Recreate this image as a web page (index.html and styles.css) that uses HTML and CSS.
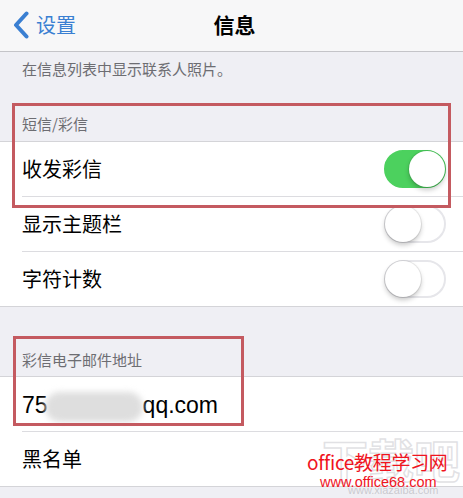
FILE: index.html
```html
<!DOCTYPE html>
<html lang="zh-CN">
<head>
    <meta charset="UTF-8">
    <meta name="viewport" content="width=device-width, initial-scale=1.0">
    <title>信息</title>
    <link rel="stylesheet" href="styles.css">
</head>
<body>
    <div class="page">
        <div class="nav">
            <div class="back">
                <svg class="chevron" width="18" height="28" viewBox="0 0 18 28">
                    <path d="M14.5 2.5 L4 14 L14.5 25.5" fill="none" stroke="#3a7fd2" stroke-width="4" stroke-linecap="round" stroke-linejoin="round"/>
                </svg>
                <span>设置</span>
            </div>
            <div class="title">信息</div>
        </div>

        <div class="note">在信息列表中显示联系人照片。</div>

        <div class="group-header first">短信/彩信</div>
        <div class="list">
            <div class="cell">
                <span class="label">收发彩信</span>
                <span class="toggle on"><span class="knob"></span></span>
            </div>
            <div class="cell">
                <span class="label">显示主题栏</span>
                <span class="toggle"><span class="knob"></span></span>
            </div>
            <div class="cell">
                <span class="label">字符计数</span>
                <span class="toggle"><span class="knob"></span></span>
            </div>
        </div>

        <div class="group-header second">彩信电子邮件地址</div>
        <div class="list">
            <div class="cell">
                <span class="email">75<span class="smudge"></span>qq.com</span>
            </div>
            <div class="cell">
                <span class="label">黑名单</span>
            </div>
        </div>

        <!-- annotation boxes and watermark drawn over the screenshot -->
        <div class="mark mark-1"></div>
        <div class="mark mark-2"></div>
        <div class="watermark">
            <div class="wm-big">下载吧</div>
            <div class="wm-red">office教程学习网</div>
            <div class="wm-url">www.office68.com</div>
            <div class="wm-small">www.xiazaiba.com</div>
        </div>
    </div>
</body>
</html>
```

FILE: styles.css
```css
body {
    margin: 0;
    background: #efeff4;
    font-family: "Noto Sans CJK SC", "Liberation Sans", sans-serif;
    color: #000;
}
.page {
    position: relative;
    width: 463px;
    height: 498px;
    overflow: hidden;
}
.nav {
    height: 51px;
    background: #f7f7f8;
    border-bottom: 1px solid #c4c4c8;
    display: flex;
    align-items: center;
    position: relative;
}
.back {
    display: flex;
    align-items: center;
    gap: 6px;
    padding-left: 12px;
    color: #3a7fd2;
    font-size: 20px;
    line-height: 24px;
    margin-top: -2px;
}
.chevron {
    display: block;
}
.title {
    position: absolute;
    left: 0;
    right: 0;
    top: 0;
    height: 51px;
    line-height: 51px;
    text-align: center;
    font-size: 21px;
    font-weight: 700;
    padding-left: 6px;
    margin-top: -1px;
    pointer-events: none;
}
.note {
    height: 45px;
    box-sizing: border-box;
    padding: 7px 22px 0;
    font-size: 15px;
    line-height: 20px;
    color: #6d6d72;
}
.group-header {
    display: flex;
    align-items: flex-end;
    box-sizing: border-box;
    padding: 0 22px;
    font-size: 15px;
    line-height: 20px;
    color: #6d6d72;
    border-bottom: 1px solid #d4d4d8;
}
.group-header.first {
    height: 45px;
    padding-bottom: 7px;
}
.group-header.second {
    height: 70px;
    padding-bottom: 6px;
}
.list {
    background: #fff;
    border-bottom: 1px solid #d4d4d8;
}
.cell {
    height: 55px;
    margin-left: 22px;
    padding-right: 17px;
    display: flex;
    align-items: center;
    justify-content: space-between;
    border-bottom: 1px solid #dcdce0;
    box-sizing: border-box;
}
.cell:last-child {
    border-bottom: none;
    height: 54px;
}
.label {
    font-size: 20px;
    line-height: 26px;
}
.email {
    font-family: "Liberation Sans", sans-serif;
    font-size: 23px;
    line-height: 26px;
    display: flex;
    align-items: center;
    margin-top: 1px;
}
.smudge {
    display: inline-block;
    width: 98px;
    height: 30px;
    margin-left: -3px;
    margin-top: 4px;
    border-radius: 15px;
    background: #dedede;
    filter: blur(3px);
}
.toggle {
    width: 62px;
    height: 38px;
    box-sizing: border-box;
    border-radius: 19px;
    border: 2px solid #e6e6ea;
    background: #fff;
    position: relative;
}
.toggle .knob {
    position: absolute;
    top: -1px;
    left: -1px;
    width: 36px;
    height: 36px;
    border-radius: 50%;
    background: #fff;
    box-shadow: 0 3px 5px rgba(0, 0, 0, 0.22), 0 0 0 1px rgba(0, 0, 0, 0.08);
}
.toggle.on {
    background: #4cd15e;
    border-color: #4cd15e;
}
.toggle.on .knob {
    left: auto;
    right: -1px;
}
.mark {
    position: absolute;
    border: 3px solid #c45a60;
    box-sizing: border-box;
}
.mark-1 {
    left: 12px;
    top: 103px;
    width: 439px;
    height: 105px;
}
.mark-2 {
    left: 13px;
    top: 336px;
    width: 231px;
    height: 90px;
}
.watermark {
    position: absolute;
    left: 300px;
    top: 420px;
    width: 163px;
    height: 78px;
}
.wm-big {
    position: absolute;
    left: 22px;
    top: 8px;
    font-size: 46px;
    line-height: 60px;
    font-weight: 700;
    color: rgba(255, 255, 255, 0.5);
    -webkit-text-stroke: 1.5px rgba(205, 205, 210, 0.6);
    white-space: nowrap;
}
.wm-red {
    position: absolute;
    left: 7px;
    top: 29px;
    font-size: 19px;
    line-height: 26px;
    color: #f0141e;
    white-space: nowrap;
    letter-spacing: -0.3px;
}
.wm-url {
    position: absolute;
    left: 20px;
    top: 53px;
    font-family: "Liberation Sans", sans-serif;
    font-size: 14.5px;
    line-height: 18px;
    color: #f0141e;
    white-space: nowrap;
}
.wm-small {
    position: absolute;
    left: 48px;
    top: 64px;
    font-family: "Liberation Sans", sans-serif;
    font-size: 11px;
    line-height: 12px;
    color: rgba(175, 175, 180, 0.6);
    white-space: nowrap;
}
```
